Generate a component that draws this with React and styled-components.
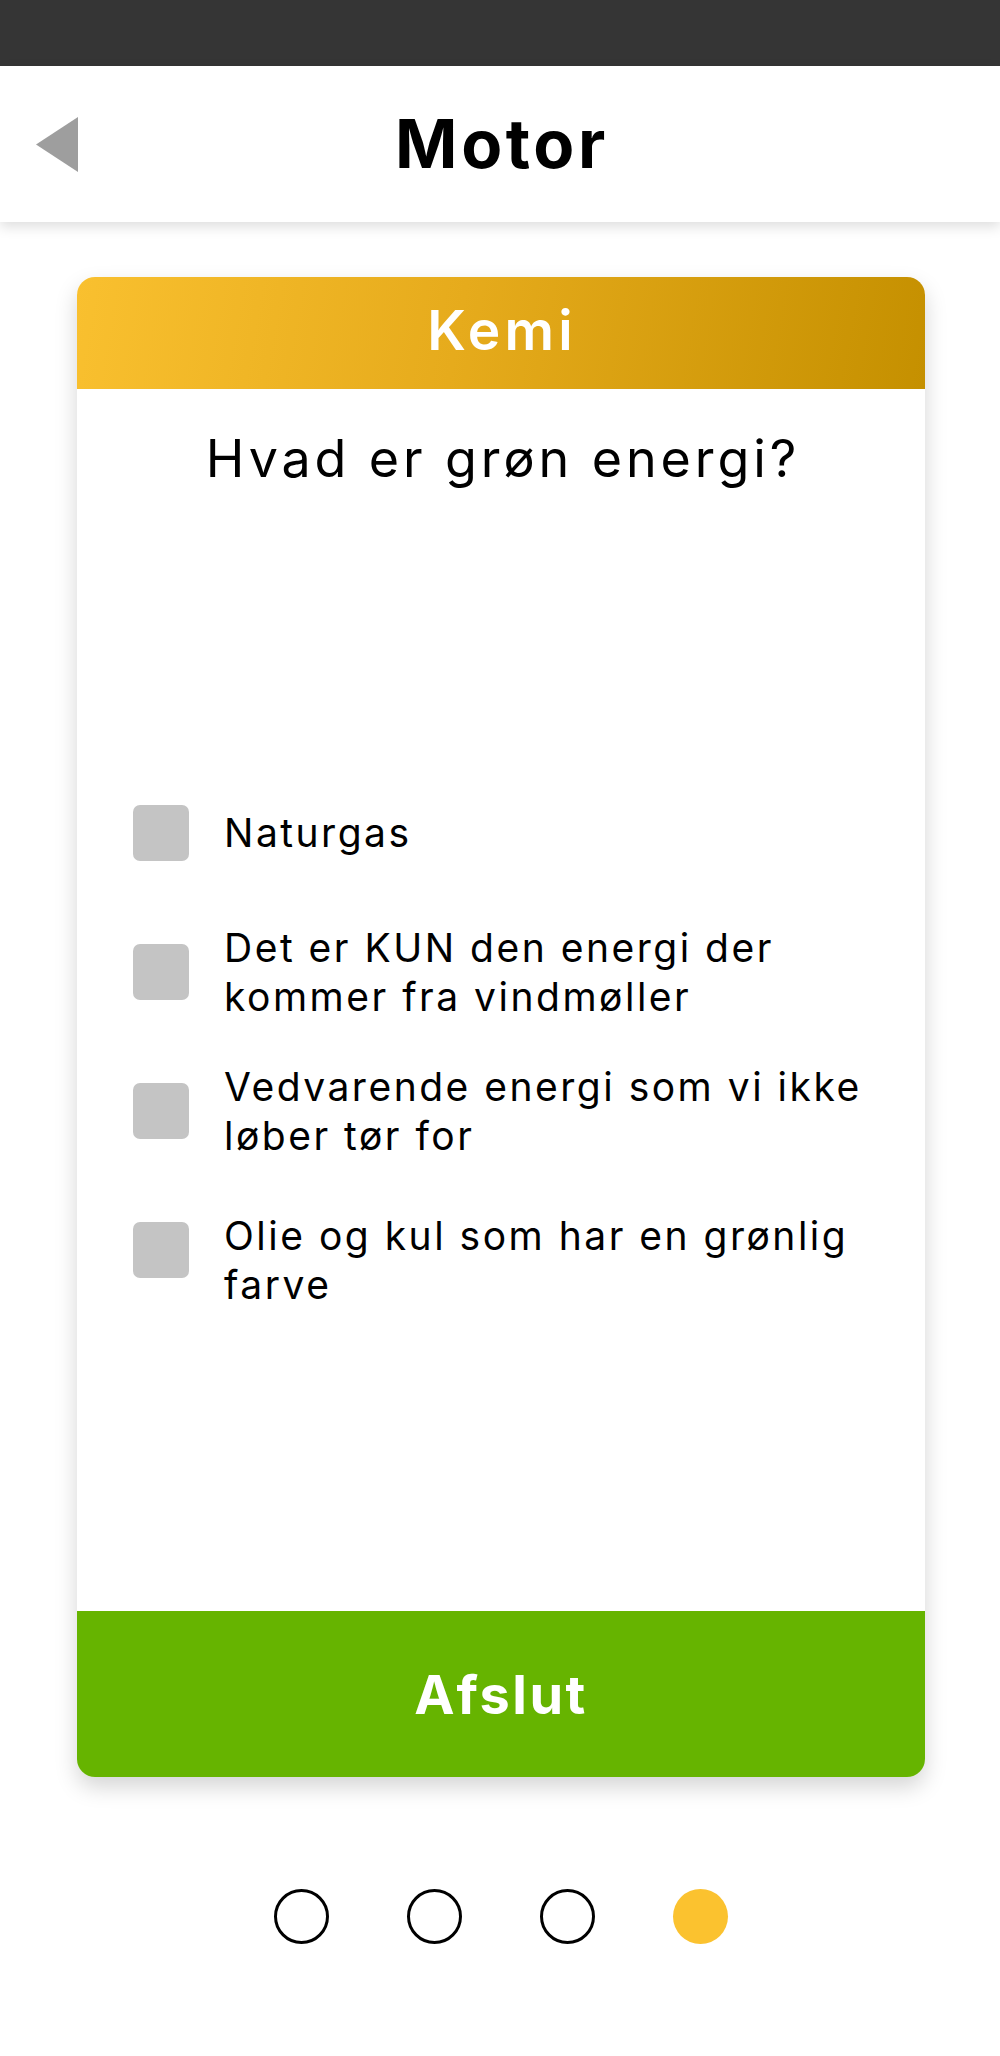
import React from "react";
import styled, { createGlobalStyle } from "styled-components";

const Global = createGlobalStyle`
  html, body { margin: 0; padding: 0; background: #ffffff; }
  body { font-family: Inter, "Noto Sans", sans-serif; color: #000; }
  * { box-sizing: border-box; }
`;

const Page = styled.div`
  width: 1000px;
  min-height: 2056px;
  background: #ffffff;
  display: flex;
  flex-direction: column;
`;

const StatusBar = styled.div`
  height: 66px;
  background: #353535;
`;

const Header = styled.header`
  height: 156px;
  background: #ffffff;
  display: grid;
  grid-template-columns: 1fr auto 1fr;
  align-items: center;
  box-shadow: 0 5px 12px rgba(0, 0, 0, 0.13);
  position: relative;
  z-index: 1;
`;

const BackButton = styled.button`
  justify-self: start;
  margin-left: 36px;
  padding: 0;
  border: 0;
  background: none;
  display: flex;
  cursor: pointer;
`;

const Title = styled.h1`
  margin: 0 0 0 4px;
  font-family: Inter, sans-serif;
  font-weight: 700;
  font-size: 67px;
  line-height: 80px;
  letter-spacing: 3.6px;
`;

const Main = styled.main`
  display: flex;
  flex-direction: column;
  align-items: center;
  padding-left: 2px;
`;

const Card = styled.section`
  width: 848px;
  margin-top: 55px;
  border-radius: 18px;
  overflow: hidden;
  background: #ffffff;
  box-shadow: 0 10px 22px rgba(0, 0, 0, 0.17);
  display: flex;
  flex-direction: column;
`;

const CardHeader = styled.div`
  height: 112px;
  padding: 0 0 6px 2px;
  background: linear-gradient(100deg, #f9c02f 0%, #e6ab1c 45%, #c59000 100%);
  display: flex;
  align-items: center;
  justify-content: center;
  color: #ffffff;
  font-weight: 600;
  font-size: 55px;
  letter-spacing: 4.2px;
`;

const CardBody = styled.div`
  height: 1222px;
  padding: 38px 0 0 56px;
  display: flex;
  flex-direction: column;
`;

const Question = styled.h2`
  margin: 0 0 0 -56px;
  padding-left: 4px;
  text-align: center;
  font-weight: 400;
  font-size: 52px;
  line-height: 64px;
  letter-spacing: 3.9px;
`;

const Options = styled.ul`
  list-style: none;
  margin: 272px 0 0;
  padding: 0;
  display: flex;
  flex-direction: column;
`;

const Option = styled.li`
  height: 139px;
  display: flex;
  align-items: center;
  gap: 35px;
`;

const Checkbox = styled.span`
  flex: none;
  width: 56px;
  height: 56px;
  border-radius: 7px;
  background: ${(p) => (p.$checked ? "#66b400" : "#c4c4c4")};
`;

const OptionText = styled.span`
  padding-top: ${(p) => p.$offset || 0}px;
  font-size: 39px;
  line-height: 49px;
  font-weight: 400;
  letter-spacing: 2.5px;
`;

const FinishButton = styled.button`
  height: 166px;
  border: 0;
  background: #66b400;
  color: #ffffff;
  font-family: Inter, sans-serif;
  font-weight: 700;
  font-size: 54px;
  letter-spacing: 2.5px;
  cursor: pointer;
`;

const Dots = styled.div`
  margin-top: 112px;
  display: flex;
  gap: 78px;
`;

const Dot = styled.span`
  width: 55px;
  height: 55px;
  border-radius: 50%;
  border: ${(p) => (p.$active ? "none" : "3px solid #000")};
  background: ${(p) => (p.$active ? "#fbc22f" : "transparent")};
`;

const options = [
  { lines: ["Naturgas"] },
  { lines: ["Det er KUN den energi der", "kommer fra vindmøller"] },
  { lines: ["Vedvarende energi som vi ikke", "løber tør for"] },
  { lines: ["Olie og kul som har en grønlig", "farve"], offset: 20 },
];

export default function App() {
  return (
    <>
      <Global />
      <Page>
        <StatusBar />
        <Header>
          <BackButton aria-label="Tilbage">
            <svg width="42" height="55" viewBox="0 0 42 55">
              <polygon points="42,0 0,27.5 42,55" fill="#9e9e9e" />
            </svg>
          </BackButton>
          <Title>Motor</Title>
          <span />
        </Header>
        <Main>
          <Card>
            <CardHeader>Kemi</CardHeader>
            <CardBody>
              <Question>Hvad er grøn energi?</Question>
              <Options>
                {options.map((opt, i) => (
                  <Option key={i}>
                    <Checkbox />
                    <OptionText $offset={opt.offset}>
                      {opt.lines.map((l, j) => (
                        <React.Fragment key={j}>
                          {j > 0 && <br />}
                          {l}
                        </React.Fragment>
                      ))}
                    </OptionText>
                  </Option>
                ))}
              </Options>
            </CardBody>
            <FinishButton>Afslut</FinishButton>
          </Card>
          <Dots>
            <Dot />
            <Dot />
            <Dot />
            <Dot $active />
          </Dots>
        </Main>
      </Page>
    </>
  );
}
